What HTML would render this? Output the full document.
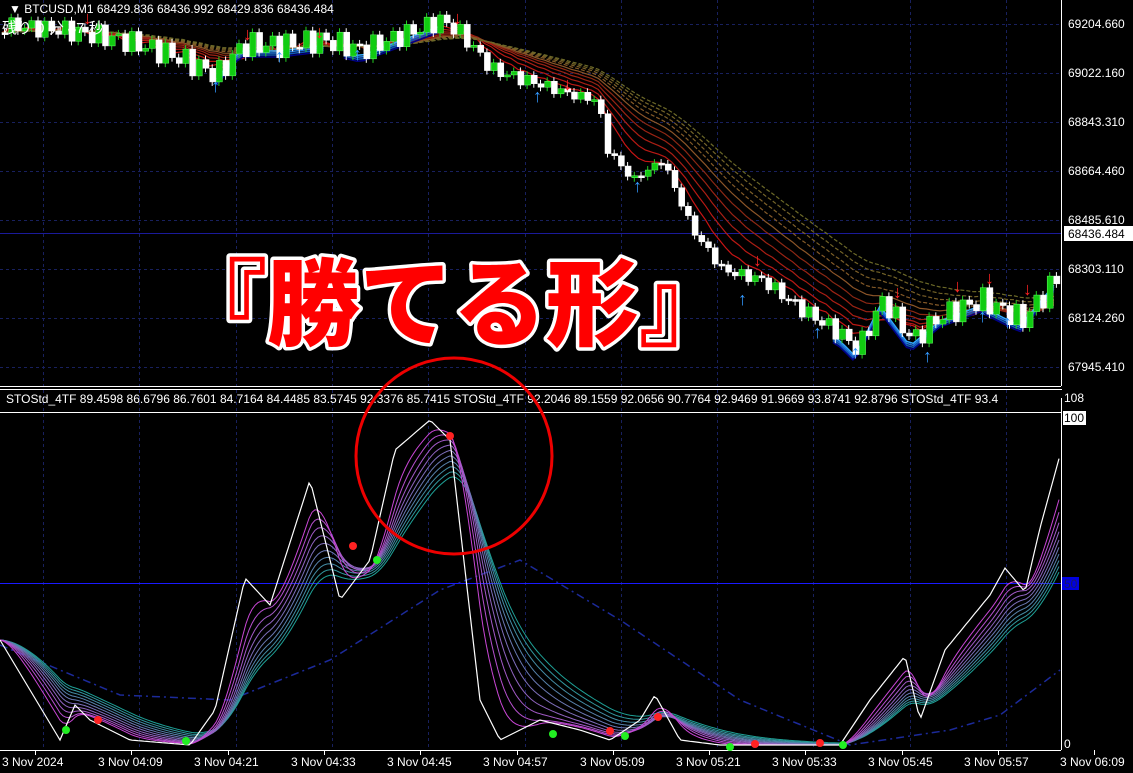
<!DOCTYPE html>
<html><head><meta charset="utf-8"><style>
html,body{margin:0;padding:0;background:#000;width:1133px;height:773px;overflow:hidden}
svg{display:block}
text{font-family:"Liberation Sans","Noto Sans CJK JP",sans-serif}
.big{font-family:"Liberation Sans","Noto Sans CJK JP",sans-serif;font-weight:900}
</style></head><body>
<svg id="s" width="1133" height="773" viewBox="0 0 1133 773">
<rect width="1133" height="773" fill="#000"/>
<g id="grid" stroke="#18205e" stroke-dasharray="3,3" stroke-width="1"></g>
<line x1="1061.5" y1="0" x2="1061.5" y2="386" stroke="#fff"/>
<line x1="0" y1="386.5" x2="1061" y2="386.5" stroke="#fff"/>
<line x1="0" y1="389.5" x2="1061" y2="389.5" stroke="#fff"/>
<line x1="1061.5" y1="389" x2="1061.5" y2="750" stroke="#fff"/>
<line x1="0" y1="750.5" x2="1061" y2="750.5" stroke="#fff"/>
<line x1="0" y1="412.5" x2="1061" y2="412.5" stroke="#fff"/>
<line x1="0" y1="583.5" x2="1061" y2="583.5" stroke="#1a1aff"/>
<line x1="0" y1="233.5" x2="1061" y2="233.5" stroke="#1a1a9a"/>
<g id="main"></g>
<g id="ind"></g>
<g fill="#fff" font-size="12">
<text x="1068" y="28">69204.660</text>
<text x="1068" y="77">69022.160</text>
<text x="1068" y="126">68843.310</text>
<text x="1068" y="175">68664.460</text>
<text x="1068" y="224">68485.610</text>
<rect x="1064" y="226" width="69" height="15" fill="#fff"/>
<text x="1068" y="238" fill="#000">68436.484</text>
<text x="1068" y="273">68303.110</text>
<text x="1068" y="322">68124.260</text>
<text x="1068" y="371">67945.410</text>
<rect x="1063" y="411" width="23" height="14" fill="#fff"/>
<text x="1064" y="422" fill="#000">100</text>
<rect x="1062" y="577" width="17" height="13" fill="#0000e0"/>
<text x="1064" y="588" fill="#1a1a60">50</text>
<text x="1064" y="748">0</text>
</g>
<g fill="#fff" font-size="12">
<text x="2" y="766">3 Nov 2024</text>
<text x="98" y="766">3 Nov 04:09</text>
<text x="194" y="766">3 Nov 04:21</text>
<text x="291" y="766">3 Nov 04:33</text>
<text x="387" y="766">3 Nov 04:45</text>
<text x="483" y="766">3 Nov 04:57</text>
<text x="580" y="766">3 Nov 05:09</text>
<text x="676" y="766">3 Nov 05:21</text>
<text x="772" y="766">3 Nov 05:33</text>
<text x="868" y="766">3 Nov 05:45</text>
<text x="964" y="766">3 Nov 05:57</text>
<text x="1060" y="766">3 Nov 06:09</text>
</g>
<g id="ticks" stroke="#fff"></g>
<text x="9" y="13" fill="#fff" font-size="12">▼ BTCUSD,M1  68429.836 68436.992 68429.836 68436.484</text>
<text x="2" y="33" fill="#fff" font-size="15">残り 0 分 47 秒</text>
<text x="6" y="403" fill="#fff" font-size="12">STOStd_4TF 89.4598 86.6796 86.7601 84.7164 84.4485 83.5745 92.3376 85.7415   STOStd_4TF 92.2046 89.1559 92.0656 90.7764 92.9469 91.9669 93.8741 92.8796   STOStd_4TF 93.4</text>
<rect x="1061" y="390" width="72" height="8" fill="#000"/>
<text x="1064" y="402" fill="#fff" font-size="12">108</text>
<text class="big" x="174" y="338" font-size="95" fill="#f00" stroke="#fff" stroke-width="7" paint-order="stroke" stroke-linejoin="round" textLength="558" lengthAdjust="spacingAndGlyphs">『勝てる形』</text>
<circle cx="454" cy="456" r="98" fill="none" stroke="#e00" stroke-width="3"/>
</svg>
<script>
const NS="http://www.w3.org/2000/svg";
function el(p,t,a){const e=document.createElementNS(NS,t);for(const k in a)e.setAttribute(k,a[k]);p.appendChild(e);return e}
const grid=document.getElementById('grid');
const vx=[43,139,236,332,428,525,621,717,813,910,1006];
vx.forEach(x=>{el(grid,'line',{x1:x+.5,y1:0,x2:x+.5,y2:386});el(grid,'line',{x1:x+.5,y1:390,x2:x+.5,y2:750});});
[24,73,122,171,220,269,318,367].forEach(y=>el(grid,'line',{x1:0,y1:y+.5,x2:1061,y2:y+.5}));
const ticks=document.getElementById('ticks');
[35,131,228,324,420,517,613,709,805,902,998,1094].forEach(x=>el(ticks,'line',{x1:x+.5,y1:750,x2:x+.5,y2:755}));
function interp(pts,x){for(let i=0;i<pts.length-1;i++){if(x>=pts[i][0]&&x<=pts[i+1][0]){const t=(x-pts[i][0])/(pts[i+1][0]-pts[i][0]);return pts[i][1]+t*(pts[i+1][1]-pts[i][1]);}}return pts[pts.length-1][1]}
const P=[[0,25],[60,30],[120,40],[170,55],[215,75],[240,45],[280,45],[320,40],[360,50],[400,35],[440,20],[460,35],[490,70],[540,85],[570,95],[595,100],[605,150],[630,180],[660,160],[690,230],[720,270],[760,280],[800,310],[840,335],[855,350],[880,300],[910,340],[940,315],[980,300],[1020,320],[1060,272]];
const main=document.getElementById('main');
const ema=(arr,a)=>{let o=[],v=arr[0];arr.forEach(y=>{v+=a*(y-v);o.push(v)});return o};
const xs=[];for(let x=2;x<1058;x+=6.7)xs.push(x);
const cl=xs.map(x=>interp(P,x)+Math.sin(x*1.3)*8+Math.sin(x*0.37)*5);
for(let k=0;k<10;k++){const e=ema(cl,0.25/(1+k*0.45));let d='';xs.forEach((x,i)=>d+=(i?'L':'M')+x.toFixed(1)+' '+e[i].toFixed(1));
 const col=k<5?`rgb(${200-k*15},${20+k*5},${20})`:`rgb(${180-k*8},${60+k*5},${40})`;
 el(main,'path',{d,fill:'none',stroke:col,'stroke-width':1.2,'stroke-dasharray':k>5?'4,2':'none'});}
[[215,330],[340,440],[830,1060]].forEach(([a,b])=>{for(let k=0;k<4;k++){let d='';xs.filter(x=>x>=a&&x<=b).forEach((x,i)=>{d+=(i?'L':'M')+x.toFixed(1)+' '+(interp(P,x)+6+k*2).toFixed(1)});el(main,'path',{d,fill:'none',stroke:['#3af','#27d','#15b','#008'][k],'stroke-width':1.5});}});
let prev=cl[0];
xs.forEach((x,i)=>{const c=cl[i],o=prev;prev=c;const up=c<o;const top=Math.min(o,c),h=Math.max(2,Math.abs(o-c));
 el(main,'line',{x1:x+2.5,y1:top-4,x2:x+2.5,y2:top+h+4,stroke:up?'#2c2':'#fff'});
 el(main,'rect',{x:x,y:top,width:6,height:h,fill:up?'#1c1':'#fff',stroke:up?'#6f6':'#fff','stroke-width':.5});});
[[90,24],[250,40],[322,38],[460,24],[570,90],[760,266],[900,298],[992,284],[1030,295],[960,292]].forEach(([x,y])=>el(main,'text',{x:x-7,y,fill:'#f22','font-size':18,'font-weight':'bold'}).textContent='↓');
[[218,92],[282,62],[360,60],[540,102],[640,192],[745,305],[820,338],[858,358],[930,362],[985,322],[1010,328]].forEach(([x,y])=>el(main,'text',{x:x-7,y,fill:'#39f','font-size':18,'font-weight':'bold'}).textContent='↑');
const ind=document.getElementById('ind');
const S=[[0,640],[30,690],[60,740],[75,705],[90,720],[130,740],[190,745],[215,710],[245,578],[270,605],[310,480],[340,600],[370,560],[395,450],[430,420],[450,440],[480,700],[500,740],[540,720],[580,730],[610,740],[640,720],[655,695],[680,740],[720,745],[800,745],[840,745],[870,700],[905,656],[920,720],[945,650],[990,595],[1005,568],[1025,592],[1040,528],[1060,455]];
const D=[[0,645],[60,670],[120,695],[230,700],[330,660],[440,590],[520,560],[620,620],[740,700],[850,745],[950,730],[1000,715],[1060,670]];
let dd='';for(let x=0;x<=1060;x+=5)dd+=(x?'L':'M')+x+' '+interp(D,x).toFixed(1);
el(ind,'path',{d:dd,fill:'none',stroke:'#1c2a9a','stroke-width':1.5,'stroke-dasharray':'8,4,2,4'});
const sx=[];for(let x=0;x<=1060;x+=3)sx.push(x);
const sv=sx.map(x=>interp(S,x));
for(let k=10;k>=1;k--){const e=ema(sv,0.3/(1+k*0.5));let d='';sx.forEach((x,i)=>d+=(i?'L':'M')+x+' '+e[i].toFixed(1));
 const t=k/10;const col=`rgb(${Math.round(220*(1-t)+30*t)},${Math.round(60*(1-t)+160*t)},${Math.round(220*(1-t)+150*t)})`;
 el(ind,'path',{d,fill:'none',stroke:col,'stroke-width':1});}
let d0='';sx.forEach((x,i)=>d0+=(i?'L':'M')+x+' '+sv[i].toFixed(1));
el(ind,'path',{d:d0,fill:'none',stroke:'#fff','stroke-width':1.2});
[[98,720],[353,546],[450,436],[610,731],[658,717],[755,744],[820,743]].forEach(([x,y])=>el(ind,'circle',{cx:x,cy:y,r:4,fill:'#f22'}));
[[66,730],[186,741],[377,560],[553,734],[625,736],[730,747],[843,745]].forEach(([x,y])=>el(ind,'circle',{cx:x,cy:y,r:4,fill:'#2e2'}));
</script>
</body></html>
